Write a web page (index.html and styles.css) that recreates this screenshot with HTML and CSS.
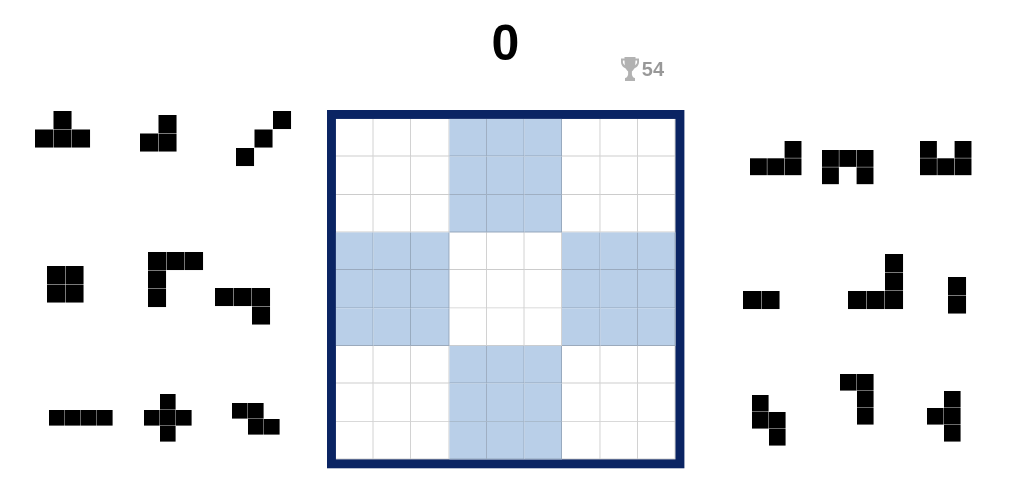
FILE: index.html
```html
<html>
<head>
    <title>Block Puzzle</title>
    <link rel="stylesheet" href="styles.css">
</head>
<body>
<div class="tray tray-left">
    <div class="piece w3 big l1"><i></i><b></b><i></i><b></b><b></b><b></b></div>
    <div class="piece w2 big l2"><i></i><b></b><b></b><b></b></div>
    <div class="piece w3 big l3"><i></i><i></i><b></b><i></i><b></b><i></i><b></b><i></i><i></i></div>
    <div class="piece w2 big l4"><b></b><b></b><b></b><b></b></div>
    <div class="piece w3 big l5"><b></b><b></b><b></b><b></b><i></i><i></i><b></b><i></i><i></i></div>
    <div class="piece w3 big l6"><b></b><b></b><b></b><i></i><i></i><b></b></div>
    <div class="piece w4 small l7"><b></b><b></b><b></b><b></b></div>
    <div class="piece w3 small l8"><i></i><b></b><i></i><b></b><b></b><b></b><i></i><b></b><i></i></div>
    <div class="piece w3 small l9"><b></b><b></b><i></i><i></i><b></b><b></b></div>
</div>

<div class="center">
    <div class="header">
        <div class="score">0</div>
        <div class="best">
            <svg class="trophy" viewBox="0 0 18 24">
                <path d="M3.5 0H14.500V1.500H18V5C18 8.500 15.500 10.500 13.300 11.500C12.500 13.200 11.200 14 10.900 14.400V17.500C11.200 19.500 12.500 20.800 14 21V24H4V21C5.500 20.800 6.800 19.500 7.100 17.500V14.400C6.800 14 5.500 13.200 4.700 11.500C2.500 10.500 0 8.500 0 5V1.500H3.500ZM1.900 3.400V5C1.900 6.300 2.700 7.500 3.900 8.200C3.700 7 3.600 5.200 3.500 3.400ZM16.100 3.400H14.500C14.400 5.200 14.300 7 14.100 8.200C15.300 7.500 16.100 6.300 16.100 5Z"/>
            </svg>
            <span>54</span>
        </div>
    </div>
    <div class="board">
        <div></div><div></div><div></div><div class="on"></div><div class="on"></div><div class="on"></div><div></div><div></div><div></div>
        <div></div><div></div><div></div><div class="on"></div><div class="on"></div><div class="on"></div><div></div><div></div><div></div>
        <div></div><div></div><div></div><div class="on"></div><div class="on"></div><div class="on"></div><div></div><div></div><div></div>
        <div class="on"></div><div class="on"></div><div class="on"></div><div></div><div></div><div></div><div class="on"></div><div class="on"></div><div class="on"></div>
        <div class="on"></div><div class="on"></div><div class="on"></div><div></div><div></div><div></div><div class="on"></div><div class="on"></div><div class="on"></div>
        <div class="on"></div><div class="on"></div><div class="on"></div><div></div><div></div><div></div><div class="on"></div><div class="on"></div><div class="on"></div>
        <div></div><div></div><div></div><div class="on"></div><div class="on"></div><div class="on"></div><div></div><div></div><div></div>
        <div></div><div></div><div></div><div class="on"></div><div class="on"></div><div class="on"></div><div></div><div></div><div></div>
        <div></div><div></div><div></div><div class="on"></div><div class="on"></div><div class="on"></div><div></div><div></div><div></div>
    </div>
</div>

<div class="tray tray-right">
    <div class="piece w3 mid r1"><i></i><i></i><b></b><b></b><b></b><b></b></div>
    <div class="piece w3 mid r2"><b></b><b></b><b></b><b></b><i></i><b></b></div>
    <div class="piece w3 mid r3"><b></b><i></i><b></b><b></b><b></b><b></b></div>
    <div class="piece w2 big r4"><b></b><b></b></div>
    <div class="piece w3 big r5"><i></i><i></i><b></b><i></i><i></i><b></b><b></b><b></b><b></b></div>
    <div class="piece w1 big r6"><b></b><b></b></div>
    <div class="piece w2 tiny r7"><b></b><i></i><b></b><b></b><i></i><b></b></div>
    <div class="piece w2 tiny r8"><b></b><b></b><i></i><b></b><i></i><b></b></div>
    <div class="piece w2 tiny r9"><i></i><b></b><b></b><b></b><i></i><b></b></div>
</div>
</body>
</html>
```

FILE: styles.css
```css
body {
    margin: 0;
    height: 500px;
    overflow: hidden;
    display: flex;
    background-color: #fff;
    font-family: "Liberation Sans", Arial, sans-serif;
}

.tray {
    position: relative;
    height: 100%;
}

.tray-left {
    width: 326.7px;
}

.tray-right {
    flex: 1;
}

.center {
    width: 357.4px;
}

.header {
    height: 109.6px;
    padding-top: 22px;
    box-sizing: border-box;
}

.score {
    font-size: 50px;
    font-weight: bold;
    line-height: 42px;
    text-align: center;
    color: #000;
}

.best {
    display: flex;
    justify-content: flex-end;
    align-items: center;
    gap: 3px;
    margin-top: -7px;
    padding-right: 20px;
    height: 24px;
    font-size: 20px;
    font-weight: bold;
    color: #000;
    opacity: 0.4;
    filter: grayscale(1);
}

.trophy {
    width: 18px;
    height: 24px;
    fill: #000;
    fill-opacity: 0.75;
}

/* board is drawn at 400px and scaled down so the lines soften */
.board {
    display: grid;
    grid-template-columns: repeat(9, 1fr);
    grid-template-rows: repeat(9, 1fr);
    width: 400px;
    height: 401px;
    box-sizing: border-box;
    border: 10.75px solid #0a2463;
    transform: scale(0.8935);
    transform-origin: 0 0;
}

.board div {
    border-right: 1px solid rgba(0, 0, 0, 0.2);
    border-bottom: 1px solid rgba(0, 0, 0, 0.2);
}

.board .on {
    background: #b9cfe8;
}

.piece {
    position: absolute;
    display: grid;
    gap: 1.4px;
    grid-auto-rows: 38.6px;
    transform-origin: 0 0;
}

.piece b {
    background: #000;
}

.w1 { grid-template-columns: 38.6px; }
.w2 { grid-template-columns: repeat(2, 38.6px); }
.w3 { grid-template-columns: repeat(3, 38.6px); }
.w4 { grid-template-columns: repeat(4, 38.6px); }

.big { transform: scale(0.4625); }
.mid { transform: scale(0.4325); }
.tiny { transform: scale(0.425); }
.small { transform: scale(0.4); }

.l1 { left: 35px; top: 110.7px; }
.l2 { left: 140.3px; top: 115px; }
.l3 { left: 236px; top: 110.7px; }
.l4 { left: 47.3px; top: 265.7px; }
.l5 { left: 148px; top: 251.7px; }
.l6 { left: 215.3px; top: 288.3px; }
.l7 { left: 49px; top: 410px; }
.l8 { left: 144.3px; top: 394.3px; }
.l9 { left: 231.7px; top: 402.7px; }

.r1 { left: 66px; top: 141px; }
.r2 { left: 138px; top: 150px; }
.r3 { left: 236px; top: 141px; }
.r4 { left: 59px; top: 291px; }
.r5 { left: 164px; top: 253.7px; }
.r6 { left: 264px; top: 277px; }
.r7 { left: 68px; top: 395px; }
.r8 { left: 156px; top: 374px; }
.r9 { left: 243px; top: 391px; }
```
